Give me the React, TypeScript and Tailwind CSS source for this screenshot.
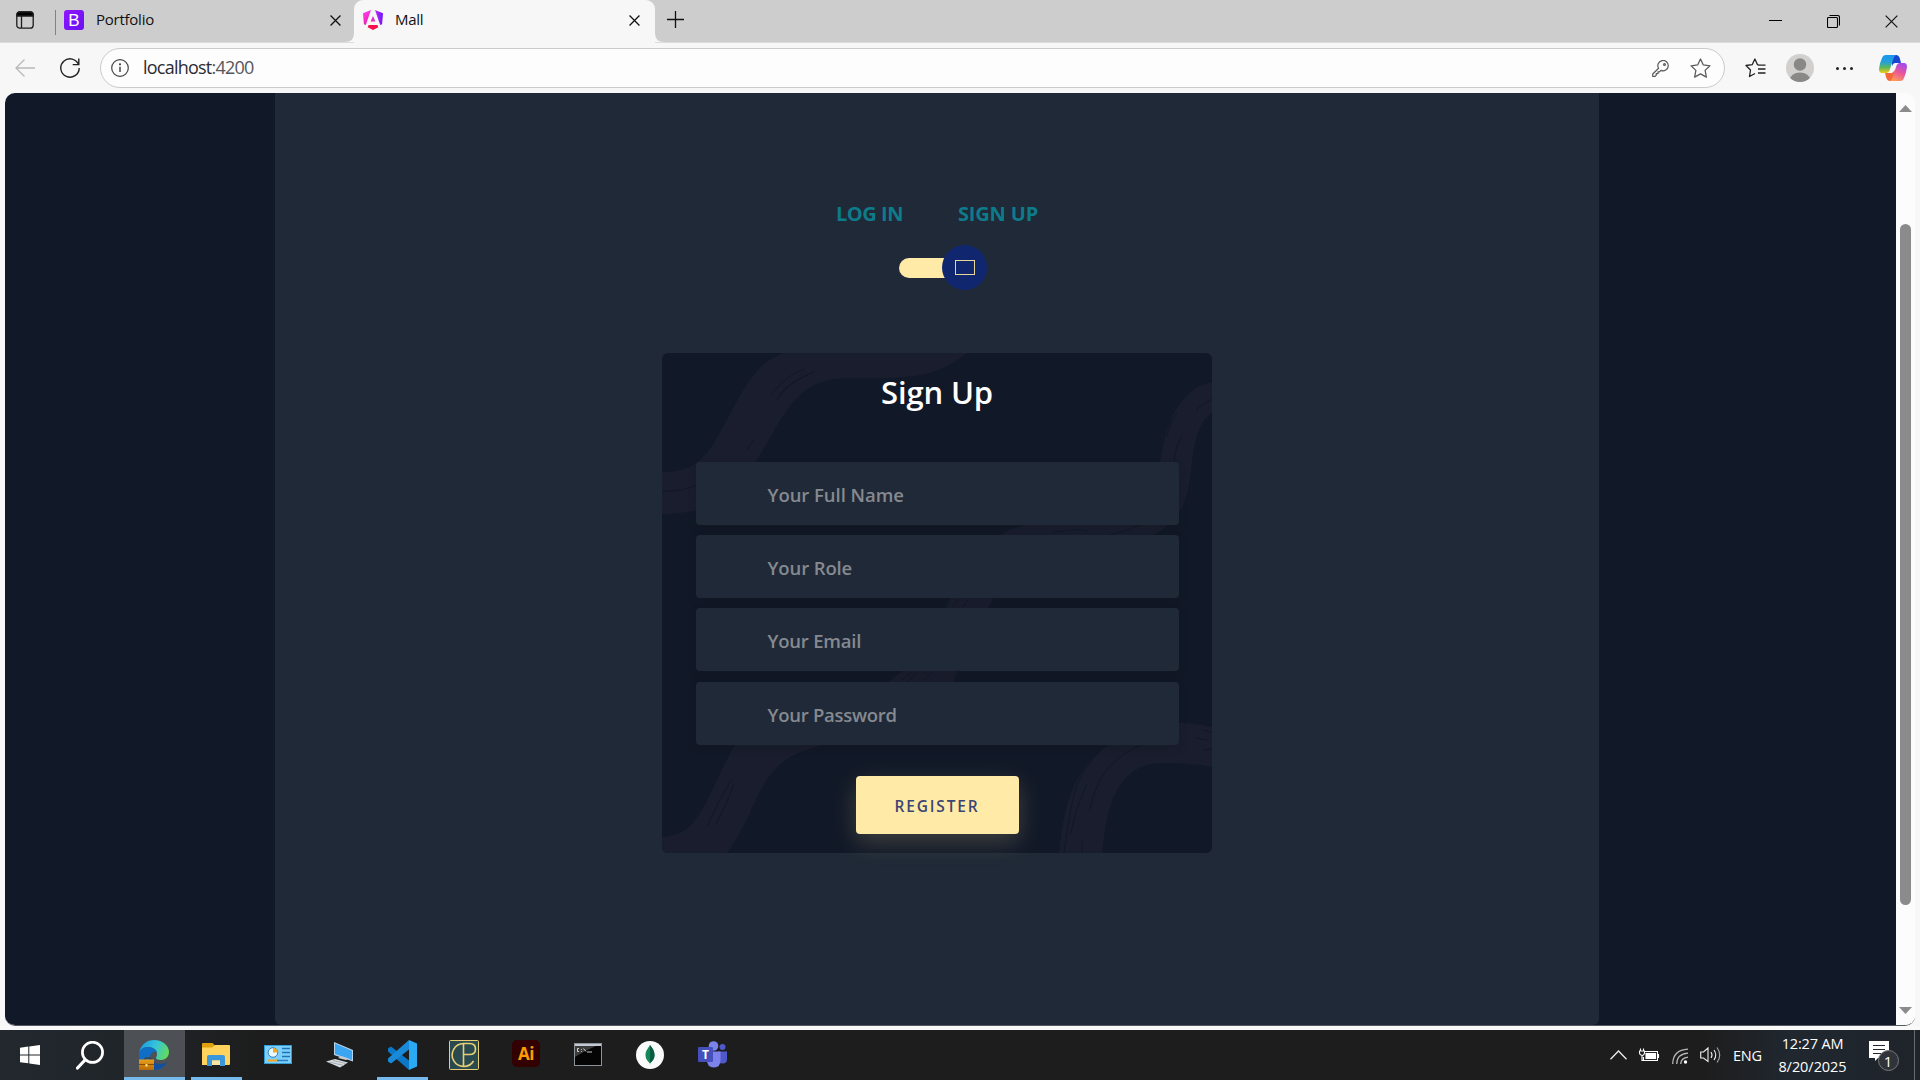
import React from "react";

const sans = "font-['Open_Sans','Noto_Sans',sans-serif]";

function WorkspacesIcon() {
  return (
    <svg width="18" height="18" viewBox="0 0 18 18" fill="none" stroke="#1b1b1b" strokeWidth="1.3">
      <rect x="0.8" y="0.8" width="16.4" height="16.4" rx="3" />
      <path d="M5.5 5v12" />
      <path d="M1 5V3.5Q1 1 3.5 1h11Q17 1 17 3.5V5Z" fill="#000" />
    </svg>
  );
}

function CloseIcon({ size = 11, width = 1.4 }: { size?: number; width?: number }) {
  return (
    <svg width={size} height={size} viewBox="0 0 12 12" stroke="#111" strokeWidth={width} fill="none">
      <path d="M.6 .6 11.4 11.4M11.4 .6.6 11.4" />
    </svg>
  );
}

function BootstrapIcon() {
  return (
    <span className="flex h-5 w-5 items-center justify-center rounded-[3px] bg-gradient-to-br from-[#8f14ff] to-[#6a10f2] font-['Liberation_Sans',sans-serif] text-[17px] leading-none text-white">
      B
    </span>
  );
}

function AngularIcon() {
  return (
    <svg width="20" height="20" viewBox="0 0 20 20">
      <defs>
        <linearGradient id="ngL" x1="0" y1="0" x2="0.3" y2="1">
          <stop offset="0" stopColor="#ff41f8" />
          <stop offset="1" stopColor="#ee22b0" />
        </linearGradient>
        <linearGradient id="ngR" x1="0" y1="0" x2="1" y2="0">
          <stop offset="0" stopColor="#c22df0" />
          <stop offset="1" stopColor="#6a14ff" />
        </linearGradient>
      </defs>
      <path d="M8 0 0 3.2.9 14.2 2.8 15Z" fill="url(#ngL)" />
      <path d="M12 0 20 3.2 19.1 14.2 17.2 15Z" fill="url(#ngR)" />
      <path d="M10 6 12.4 11.5H7.6Z" fill="#e32cc6" />
      <path d="M5.6 15H14.4L15.3 17.2 10 20 4.7 17.2Z" fill="#f5104f" />
    </svg>
  );
}

function TabStrip() {
  return (
    <div className="flex h-[42px] bg-[#cdcdcd]">
      <div className="flex h-[42px] w-[354px] items-center rounded-br-[10px] bg-[#cdcdcd] pb-[2px]">
        <div className="ml-4">
          <WorkspacesIcon />
        </div>
        <div className="ml-[21px] mt-[4px] h-[25px] w-px bg-[#828282]" />
        <div className="ml-2">
          <BootstrapIcon />
        </div>
        <span className="mb-[2px] ml-3 w-[234px] text-[15px] leading-5 tracking-[-0.25px]">Portfolio</span>
        <div className="mt-px">
          <CloseIcon />
        </div>
      </div>
      <div className="relative flex h-[43px] w-[301px] items-center rounded-t-[9px] bg-[#f7f7f7] pb-[3px] pl-[9px]">
        <svg className="absolute bottom-[1px] left-[-9px]" width="9" height="9" viewBox="0 0 9 9">
          <path d="M9 0V9H0Q9 9 9 0" fill="#f7f7f7" />
        </svg>
        <svg className="absolute bottom-[1px] right-[-9px]" width="9" height="9" viewBox="0 0 9 9">
          <path d="M0 0V9H9Q0 9 0 0" fill="#f7f7f7" />
        </svg>
        <AngularIcon />
        <span className="mb-[2px] ml-[12px] w-[234px] text-[15px] leading-5 tracking-[-0.3px]">Mall</span>
        <CloseIcon />
      </div>
      <svg className="ml-[12px] mt-[11px]" width="17" height="17" viewBox="0 0 17 17" stroke="#111" strokeWidth="1.3">
        <path d="M8.5 0V17M0 8.5H17" />
      </svg>
      <div className="ml-auto flex items-start gap-[45px] pr-[22px] pt-[15px]">
        <svg width="13" height="13" viewBox="0 0 13 13" stroke="#000">
          <path d="M0 5.5H13" />
        </svg>
        <svg width="13" height="13" viewBox="0 0 13 13" stroke="#000" fill="none" strokeWidth="1.1">
          <rect x="0.5" y="2.5" width="10" height="10" rx="1" />
          <path d="M2.5.5h8q2 0 2 2v8" />
        </svg>
        <CloseIcon size={13} width={1.1} />
      </div>
    </div>
  );
}

function CopilotIcon() {
  return (
    <svg width="28" height="26" viewBox="0 0 28 26">
      <defs>
        <linearGradient id="cpA" x1="0" y1="0" x2="0" y2="1">
          <stop offset="0" stopColor="#1896f0" />
          <stop offset="0.4" stopColor="#24a0d8" />
          <stop offset="0.7" stopColor="#5fb85a" />
          <stop offset="1" stopColor="#f2cc14" />
        </linearGradient>
        <linearGradient id="cpB" x1="0.7" y1="0" x2="0.3" y2="1">
          <stop offset="0" stopColor="#a24bf0" />
          <stop offset="0.5" stopColor="#e8559c" />
          <stop offset="1" stopColor="#ff9a58" />
        </linearGradient>
      </defs>
      <path d="M13 0h4q3 0 4 4l1 4h-6q-2 0-3 3Z" fill="#1746d0" />
      <path d="M6 18h7l3-3-1 8q-1 3-4 3-3 0-4-4Z" fill="#f4683c" />
      <path d="M7 0h10q-2 1-3 5l-3 9q-1 4-4 4H3q-3 0-3-4Q1 7 3 3 4 0 7 0Z" fill="url(#cpA)" />
      <path d="M21 26H11q2-1 3-5l3-9q1-4 4-4h4q3 0 3 4-1 7-3 11-1 3-4 3Z" fill="url(#cpB)" />
    </svg>
  );
}

const STAR = "M10 .9 12.7 6.6 19 7.4 14.4 11.8 15.6 18.2 10 15.1 4.4 18.2 5.6 11.8 1 7.4 7.3 6.6Z";

function Toolbar() {
  return (
    <div className="flex h-[51px] items-center border-t border-[#dcdcdc] bg-[#f7f7f7]">
      <svg className="ml-[15px]" width="20" height="18" viewBox="0 0 20 18" fill="none" stroke="#b9b9b9" strokeWidth="1.3">
        <path d="M20 9H1M9.5.5 1 9l8.500 8.500" />
      </svg>
      <svg className="ml-[25px]" width="20" height="20" viewBox="0 0 20 20" fill="none" stroke="#222" strokeWidth="1.4">
        <path d="M18.700 7A9.200 9.200 0 1 0 19.200 10M18.800 .5V6.600H12.700" />
      </svg>
      <div className="ml-5 flex h-10 w-[1625px] items-center rounded-full border border-[#cbcbcb] bg-[#fdfdfd] pl-[10px]">
        <svg width="18" height="18" viewBox="0 0 18 18" fill="none" stroke="#444" strokeWidth="1.2">
          <circle cx="9" cy="9" r="8.300" />
          <path d="M9 7.700V13" strokeWidth="1.500" />
          <circle cx="9" cy="5.300" r="0.500" fill="#444" />
        </svg>
        <span className="mb-[2px] ml-[14px] text-[18px] leading-6 tracking-[-0.77px] text-[#2b2b33]">
          localhost<span className="text-[#55565c]">:4200</span>
        </span>
        <svg className="ml-auto" width="17" height="17" viewBox="0 0 17 17" fill="none" stroke="#5b5b5b" strokeWidth="1.200">
          <path d="M6.600 8.300A5.200 5.200 0 1 1 9 10.400L7.500 11.800H6V13.600H4.200V15.400L3.200 16.400H.7V14Z" strokeLinejoin="round" />
          <circle cx="12.500" cy="4.500" r="0.900" />
        </svg>
        <svg className="ml-[21px] mr-[13px]" width="21" height="20" viewBox="0 0 20 19" fill="none" stroke="#5b5b5b" strokeWidth="1.200" strokeLinejoin="round">
          <path d={STAR} />
        </svg>
      </div>
      <svg className="ml-[20px]" width="21" height="20" viewBox="0 0 21 20" fill="none" stroke="#222" strokeWidth="1.300" strokeLinejoin="round">
        <path d="M14 7.200 12.400 6.600 9.900 1 7.300 6.600 1 7.500 5.500 12 4.500 18.500 10 15.500M13 7.200H20.500M13 11H20.500M13 15H20.500" />
      </svg>
      <svg className="ml-[20px]" width="28" height="28" viewBox="0 0 28 28">
        <clipPath id="avatar">
          <circle cx="14" cy="14" r="14" />
        </clipPath>
        <g clipPath="url(#avatar)">
          <rect width="28" height="28" fill="#d2d0ce" />
          <circle cx="14" cy="10.500" r="6.200" fill="#8a8886" />
          <ellipse cx="14" cy="26" rx="10.300" ry="7.500" fill="#8a8886" />
        </g>
      </svg>
      <div className="ml-[22px] flex gap-[4px]">
        <span className="h-[3px] w-[3px] rounded-full bg-[#222]" />
        <span className="h-[3px] w-[3px] rounded-full bg-[#222]" />
        <span className="h-[3px] w-[3px] rounded-full bg-[#222]" />
      </div>
      <div className="ml-[26px]">
        <CopilotIcon />
      </div>
    </div>
  );
}

function CardPattern() {
  return (
    <svg className="absolute inset-0" width="550" height="500" viewBox="0 0 550 500" fill="#191d2e">
      <path d="M0 119C14 119 25 117 35 109 48 100 55 84 64 68 80 40 90 12 121 0H305C295 8 287 13 268 20 245 26 215 25 190 25 170 26 155 27 138 42 120 58 110 85 93 109 75 138 55 161 0 161Z" />
      <path d="M550 29C515 36 503 75 498 109 492 150 470 165 400 165 340 172 320 190 305 215 285 245 270 300 226 329 180 350 90 360 73 392 55 422 48 448 33 467 24 480 12 483 0 484V500H65C90 465 92 442 110 420 124 402 145 396 161 392 230 380 270 360 291 329 310 290 320 265 331 246 365 205 450 205 491 182 535 160 525 120 534 86 537 75 542 65 550 60Z" />
      <path d="M397 500C402 450 412 415 448 391 470 375 495 370 516 370 530 370 540 372 550 374V414C535 411 519 410 501 410 478 410 465 421 457 434 446 450 443 475 440 500Z" />
      <g fill="none" stroke="#111827" strokeWidth="1">
        <path d="M109 42Q122 24 142 16M114 48Q126 29 153 18M117 42Q132 26 146 22M85 97Q89 90 92 86M0 138Q20 139 34 132M505 84Q508 68 515 60M512 109Q513 94 520 83M534 57Q542 50 550 46" />
        <path d="M45 473Q56 449 69 427M54 471Q66 450 72 430M240 327 251 318M245 329 256 319M262 327 270 319M291 253 297 246M301 254 306 247" />
        <path d="M402 500Q407 462 412 441 418 417 440 396M408 482Q414 455 424 432M428 457C434 425 450 403 482 391M420 500V487M534 385 545 387M540 377 550 379M540 397 550 396" />
        <path d="M390 180Q410 175 426 178M448 182Q468 177 478 172" />
      </g>
    </svg>
  );
}

const FIELDS = [
  { label: "Your Full Name", cls: "tracking-[-0.05px]" },
  { label: "Your Role", cls: "tracking-[-0.12px]" },
  { label: "Your Email", cls: "tracking-[-0.22px]" },
  { label: "Your Password", cls: "tracking-[-0.28px]" },
];

function SignUpCard() {
  return (
    <div className="relative h-[500px] w-[550px] rounded-[6px] bg-[#111827]">
      <div className="absolute inset-0 overflow-hidden rounded-[6px]">
        <CardPattern />
      </div>
      <div className="relative flex flex-col items-center pt-[17px]">
        <h4 className="h-[44px] whitespace-nowrap text-[31px] font-semibold leading-[44px] tracking-[-0.150px] text-white">Sign Up</h4>
        <div className="mt-[48px] flex w-[483px] flex-col gap-[10.200px]">
          {FIELDS.map((f) => (
            <div
              key={f.label}
              className="flex h-[63px] items-center rounded-[4px] bg-[#1f2937] pl-[72px] pt-[3px] shadow-[0_4px_8px_0_rgba(21,21,21,0.2)]"
            >
              <span className={"whitespace-nowrap text-[18.500px] font-semibold leading-6 text-[#868990] " + f.cls}>{f.label}</span>
            </div>
          ))}
        </div>
        <button className="mt-[31.500px] h-[58px] w-[163px] rounded-[4px] bg-[#ffeba7] pt-[3px] text-[15.500px] font-semibold tracking-[1.800px] text-[#3b4574] shadow-[0_8px_24px_0_rgba(255,235,167,0.2)]">
          REGISTER
        </button>
      </div>
    </div>
  );
}

function Viewport() {
  return (
    <div className="mx-[5px] flex h-[933px] overflow-hidden rounded-[10px] border-b border-[#55585f] bg-[#fcfcfc]">
      <div className="flex w-[1891px] justify-center bg-[#111827] pr-[27px]">
        <main className="flex h-[932px] w-[1324px] flex-col items-center rounded-b-[6px] bg-[#1f2937]">
          <div className="mt-[109px] flex h-6 gap-[55px] whitespace-nowrap text-[20px] font-bold leading-6 text-[#0e7a8a]">
            <span className="tracking-[-0.450px]">LOG IN</span>
            <span className="tracking-[-0.170px]">SIGN UP</span>
          </div>
          <div className="mt-[19px] flex h-[45px] items-center pl-[12px]">
            <div className="h-5 w-[53px] rounded-l-full bg-[#ffeba7]" />
            <div className="-ml-[10px] flex h-[45px] w-[45px] items-center justify-center rounded-full bg-[#102770]">
              <div className="h-[15px] w-5 border border-[#e8d79c]" />
            </div>
          </div>
          <div className="mt-[63px]">
            <SignUpCard />
          </div>
        </main>
      </div>
      <div className="flex w-[19px] flex-col items-center bg-[#fcfcfc]">
        <svg className="mt-[12px]" width="13" height="7" viewBox="0 0 13 7" fill="#8b8b8b">
          <path d="M6.500 0 13 7H0Z" />
        </svg>
        <div className="mt-[112px] h-[681px] w-[11px] rounded-full bg-[#8b8b8b]" />
        <svg className="mt-[102px]" width="13" height="7" viewBox="0 0 13 7" fill="#8b8b8b">
          <path d="M6.500 7 13 0H0Z" />
        </svg>
      </div>
    </div>
  );
}

function EdgeIcon() {
  return (
    <svg width="30" height="30" viewBox="0 0 30 30">
      <defs>
        <linearGradient id="edA" x1="0" y1="0.3" x2="1" y2="0.6">
          <stop offset="0" stopColor="#1a9be0" />
          <stop offset="0.5" stopColor="#35c4dc" />
          <stop offset="1" stopColor="#62dc58" />
        </linearGradient>
        <linearGradient id="edC" x1="0" y1="0" x2="0" y2="1">
          <stop offset="0" stopColor="#e8a01c" />
          <stop offset="1" stopColor="#b86a08" />
        </linearGradient>
      </defs>
      <path d="M0 13C2 4 8 0 15 0c9 0 15 6 15 12 0 5-4 8-8 8-3 0-5-1-5-2 0-1 1-1 1-4 0-5-5-7-9-7-4 0-8 3-9 6Z" fill="url(#edA)" />
      <path d="M0 15C0 10 4 7 8 7c6 0 10 3 10 6-3-3-7 0-7 5 0 6 4 9 9 9 3 0 5-1 7-3-3 4-7 6-12 6C7 30 0 24 0 15Z" fill="#0f6fc6" />
      <path d="M12 17c1 5 5 7 9 7 3 0 5-1 7-2-3 6-8 8-13 8-5-2-6-9-3-13Z" fill="#124f9c" />
      <path d="M6 20v-2h5v2" fill="none" stroke="#59300a" />
      <rect x="0" y="19.500" width="15" height="10.500" fill="url(#edC)" />
      <path d="M0 24.500H15" stroke="#8a4c04" />
      <rect x="6.500" y="24" width="2" height="2.500" fill="#ffe680" />
    </svg>
  );
}

function ExplorerIcon() {
  return (
    <svg width="28" height="23" viewBox="0 0 28 23">
      <path d="M0 1Q0 0 1 0H10.500L13 2.500V8H0Z" fill="#dfa00c" />
      <path d="M0 4.500H10L13 2H27Q28 2 28 3V21Q28 22 27 22H0Z" fill="#ffd35c" />
      <path d="M5 23V14Q5 12 7 12H21Q23 12 23 14V23H18V17.500H10V23Z" fill="#3b97dc" />
      <path d="M10 17.500H18V22H10Z" fill="#fbe3a0" />
    </svg>
  );
}

function ControlPanelIcon() {
  return (
    <svg width="28" height="19" viewBox="0 0 28 19">
      <rect x="0.500" y="0.500" width="27" height="18" fill="#7fd0f8" stroke="#2f9bd8" />
      <circle cx="9" cy="7.500" r="4.800" fill="#e9f7ff" stroke="#2b7fc4" />
      <path d="M9 7.500V2.800A4.700 4.700 0 0 1 13.700 7.500Z" fill="#f5a623" />
      <path d="M18 3.500H26M18 7.500H26M18 11.500H26" stroke="#1c74b8" strokeWidth="1.500" />
      <path d="M4 15.500H13" stroke="#f5a623" strokeWidth="2" />
      <path d="M13 15.500H24" stroke="#2b7fc4" strokeWidth="1.500" />
    </svg>
  );
}

function ComputerIcon() {
  return (
    <svg width="28" height="26" viewBox="0 0 28 26">
      <path d="M8 0 27 8V19.500L8 13Z" fill="#b9d3e6" />
      <path d="M9 1.500 26 8.800V18L9 12Z" fill="#3ba5f2" />
      <path d="M12 16 20 18 23 16.500 15 14Z" fill="#c6ccd2" />
      <path d="M0 19.500 9 17 22 20.500 14 25.500Z" fill="#d9dde0" />
      <path d="M3 20 18 23.500M7 18.500 20 21.500" stroke="#98a0a6" strokeWidth="0.800" />
    </svg>
  );
}

function VsCodeIcon() {
  return (
    <svg width="30" height="30" viewBox="0 0 30 30">
      <path d="M1 8.500 4 6.500 22 20.500V30L1 11.500Z" fill="#0b78c8" />
      <path d="M22 0V9.500L4 23.500 1 21.500V18.500Z" fill="#1a8ad8" />
      <path d="M22 0 30 3.500V26.500L22 30Z" fill="#2aaaf2" />
    </svg>
  );
}

function MonogramIcon() {
  return (
    <svg width="30" height="30" viewBox="0 0 30 30" fill="none" stroke="#e9cf74" strokeWidth="1.600">
      <rect x="0.500" y="0.500" width="29" height="29" rx="1" fill="#2b4a50" strokeWidth="1" />
      <path d="M24.500 21A11.500 11.500 0 1 1 14.500 3.500H20.500Q26.500 3.500 26.500 9 26.500 14.500 20.500 14.500H14.500M14.500 3.500V26.500" />
    </svg>
  );
}

function TerminalIcon() {
  return (
    <svg width="28" height="23" viewBox="0 0 28 23">
      <rect x="0.500" y="0.500" width="27" height="22" fill="#050505" stroke="#8c9298" />
      <path d="M1 3V1H27V3Z" fill="#c3c9d2" />
      <path d="M1 3H22Q10 8 1 14Z" fill="#3c3c3c" />
      <path d="M5 5.500H3.500V8.500H5M7.500 6v.8M7.500 8v.8M9.500 5.500 12 8.500M13 9H18" stroke="#e0e0e0" fill="none" strokeWidth="0.900" />
    </svg>
  );
}

function MongoIcon() {
  return (
    <svg width="28" height="28" viewBox="0 0 28 28">
      <circle cx="14" cy="14" r="14" fill="#fafafa" />
      <path d="M14 4C17 8 18.500 10 18.500 14.500 18.500 18 16.500 20 14.300 22L14 24 13.700 22C11.500 20 9.500 18 9.500 14.500 9.500 10 11.500 8 14 4Z" fill="#13875a" />
      <path d="M14 4C17 8 18.500 10 18.500 14.500 18.500 18 16.500 20 14 22Z" fill="#0a5c40" />
    </svg>
  );
}

function TeamsIcon() {
  return (
    <div className="relative h-[27px] w-[29px]">
      <svg width="29" height="27" viewBox="0 0 29 27">
        <circle cx="24.500" cy="6" r="3" fill="#5059c9" />
        <path d="M20 10.500H29V18Q29 22.500 24.500 22.500 22 22.500 20 21Z" fill="#5059c9" />
        <circle cx="15.500" cy="5" r="4.800" fill="#7b83eb" />
        <path d="M9 10.500H22.500V19Q22.500 26.500 16 26.500 9 26.500 9 19Z" fill="#7b83eb" />
        <rect x="0" y="6" width="15" height="15" rx="1.300" fill="#4650bd" />
      </svg>
      <span className="absolute left-0 top-[6px] w-[15px] text-center text-[12px] font-bold leading-[15px] text-white">T</span>
    </div>
  );
}

type Item = { icon: React.ReactNode; cls: string };

const APPS: Item[] = [
  { icon: <EdgeIcon />, cls: "w-[61px] bg-[#4d5155] border-b-[3px] border-[#76b9ed] pr-[1px]" },
  { icon: <ExplorerIcon />, cls: "ml-[6px] mr-[5px] w-[51px] border-b-[3px] border-[#76b9ed] pr-[1px]" },
  { icon: <ControlPanelIcon />, cls: "ml-[1px] w-[59px] border-b-[3px] border-transparent" },
  { icon: <ComputerIcon />, cls: "ml-[2px] w-[62px] border-b-[3px] border-transparent" },
  { icon: <VsCodeIcon />, cls: "ml-[6px] mr-[5px] w-[51px] border-b-[3px] border-[#76b9ed] pr-[1px]" },
  { icon: <MonogramIcon />, cls: "ml-[2px] w-[58px] border-b-[3px] border-transparent" },
  {
    icon: (
      <span className="mb-[2px] flex h-[27px] w-[28px] items-center justify-center rounded-[5px] bg-[#330000] pb-px text-[17px] font-bold leading-none tracking-[-0.500px] text-[#ff9a00]">
        Ai
      </span>
    ),
    cls: "w-[66px] border-b-[3px] border-transparent",
  },
  { icon: <TerminalIcon />, cls: "w-[57px] border-b-[3px] border-transparent" },
  { icon: <MongoIcon />, cls: "w-[68px] border-b-[3px] border-transparent" },
  { icon: <TeamsIcon />, cls: "w-[57px] border-b-[3px] border-transparent" },
];

function Taskbar() {
  return (
    <div className="flex h-[50px] bg-[linear-gradient(90deg,#22282e_0px,#20252a_120px,#1d1d1d_260px,#1d1d1d_1700px,#20272f_1790px,#1f242a_1920px)] text-white">
      <svg className="ml-5 mt-[15px]" width="20" height="20" viewBox="0 0 20 20" fill="#fff">
        <path d="M0 2.800 8.300 1.600V9.400H0ZM9.300 1.500 20 0V9.400H9.300ZM0 10.400H8.300V18.300L0 17.200ZM9.300 10.400H20V20L9.300 18.500Z" />
      </svg>
      <svg className="ml-[36px] mt-[11px]" width="28" height="29" viewBox="0 0 28 29" fill="none" stroke="#fff" strokeWidth="2.700" strokeLinecap="round">
        <circle cx="16.500" cy="11.300" r="10.100" />
        <path d="M9 19 1.500 27" strokeWidth="3.200" />
      </svg>
      <div className="ml-[20px] flex h-[50px]">
        {APPS.map((a, i) => (
          <div key={i} className={"flex h-[50px] items-center justify-center pt-[2px] " + a.cls}>
            {a.icon}
          </div>
        ))}
      </div>
      <div className="ml-auto flex h-[50px] items-center">
        <svg className="mr-[12px]" width="17" height="10" viewBox="0 0 17 10" fill="none" stroke="#eee" strokeWidth="1.300">
          <path d="M.5 9.300 8.500 1 16.500 9.300" />
        </svg>
        <svg className="mr-[12px]" width="21" height="15" viewBox="0 0 21 15" fill="none" stroke="#fff" strokeWidth="1.100">
          <path d="M5.500 3.500H18.500V12.500H4.500V9M19.500 6V10M1.500 .5V3M4.500 .5V3M.5 3H5.500V5Q5 7.500 3 7.500 .5 7 .5 5ZM3 7.500V12.500H4.500" />
          <rect x="7" y="5.500" width="9.500" height="5" fill="#fff" />
        </svg>
        <svg className="mr-[11px] mt-[2px]" width="17" height="17" viewBox="0 0 17 17" fill="none" stroke="#b8b8b8" strokeWidth="1.300">
          <path d="M.7 16Q1 2 16 1.200M4.700 16Q5 6 16 5.200M8.700 16Q9 10 16 9.200" />
          <circle cx="13.500" cy="14" r="1.700" fill="#fff" stroke="none" />
        </svg>
        <svg className="mr-[12px]" width="21" height="18" viewBox="0 0 21 18" fill="none" stroke="#eee" strokeWidth="1.100">
          <path d="M.7 6H3.500L8 2V15.500L3.500 12H.7ZM11 6Q13 9 11 12M14 4Q17.500 9 14 14" />
          <path d="M17 1.500Q22.500 9 17 16.500" stroke="#aaa" />
        </svg>
        <span className="mr-[16px] w-[29px] whitespace-nowrap pt-px text-[14.500px] tracking-[-0.250px]">ENG</span>
        <div className="flex w-[69px] flex-col items-center whitespace-nowrap text-[14.500px] leading-[23px]">
          <span className="tracking-[-0.150px]">12:27 AM</span>
          <span className="tracking-[-0.050px]">8/20/2025</span>
        </div>
        <div className="relative ml-[22px] h-[31px] w-[30px]">
          <svg width="30" height="31" viewBox="0 0 30 31">
            <path d="M0 1H20V18H9L6 21V18H0Z" fill="#fff" />
            <path d="M4 5.500H16M4 9.500H16M4 13.500H12" stroke="#20272f" strokeWidth="1.200" />
            <circle cx="19.500" cy="20.500" r="10" fill="#30343a" stroke="#777" />
          </svg>
          <span className="absolute left-[9px] top-[11px] w-[20px] text-center text-[15px] leading-5">1</span>
        </div>
        <div className="ml-[15px] mr-[5px] h-[50px] w-px bg-[#686b6e]" />
      </div>
    </div>
  );
}

export default function App() {
  return (
    <div className={"flex h-[1080px] w-[1920px] flex-col overflow-hidden bg-[#f7f7f7] text-[#111] " + sans}>
      <TabStrip />
      <Toolbar />
      <Viewport />
      <div className="h-[4px] bg-[#f9f9f9]" />
      <Taskbar />
    </div>
  );
}
